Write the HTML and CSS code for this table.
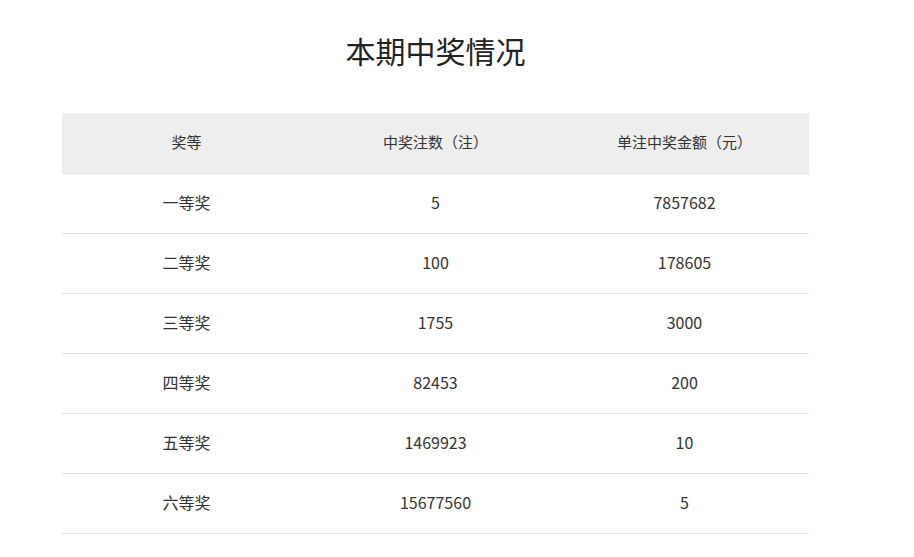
FILE: index.html
```html
<!DOCTYPE html>
<html lang="zh">
<head>
<meta charset="utf-8">
<link rel="stylesheet" href="styles.css">
</head>
<body>
<div class="wrap">
  <h2 class="title">本期中奖情况</h2>
  <table class="prize">
    <thead>
      <tr><th>奖等</th><th>中奖注数（注）</th><th>单注中奖金额（元）</th></tr>
    </thead>
    <tbody>
      <tr><td>一等奖</td><td>5</td><td>7857682</td></tr>
      <tr><td>二等奖</td><td>100</td><td>178605</td></tr>
      <tr><td>三等奖</td><td>1755</td><td>3000</td></tr>
      <tr><td>四等奖</td><td>82453</td><td>200</td></tr>
      <tr><td>五等奖</td><td>1469923</td><td>10</td></tr>
      <tr><td>六等奖</td><td>15677560</td><td>5</td></tr>
    </tbody>
  </table>
</div>
</body>
</html>
```
FILE: styles.css
```css
html, body {
  margin: 0;
  padding: 0;
  background: #fff;
}
body {
  font-family: "Noto Sans CJK SC", "Noto Sans", sans-serif;
  color: #333;
}
.wrap {
  width: 747px;
  margin-left: 62px;
  padding-top: 26px;
}
.title {
  margin: 0;
  height: 87px;
  line-height: 48px;
  text-align: center;
  font-size: 30px;
  font-weight: normal;
  color: #222;
}
.prize {
  width: 747px;
  border-collapse: collapse;
  table-layout: fixed;
  font-size: 16px;
}
.prize th, .prize td {
  height: 56px;
  padding: 0 0 3px;
  text-align: center;
  vertical-align: middle;
  border-bottom: 1px solid #e3e3e3;
  font-weight: normal;
  color: #333;
  line-height: 20px;
}
.prize th {
  height: 57px;
  font-size: 15px;
  background: #eee;
}
```
